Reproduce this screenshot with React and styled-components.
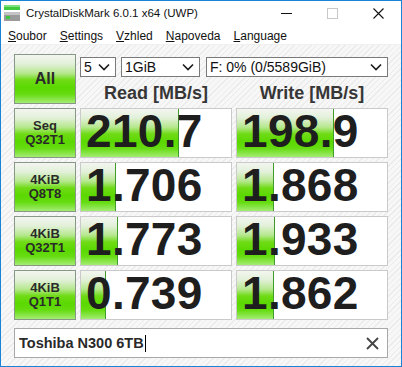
import React from 'react';
import styled, { createGlobalStyle } from 'styled-components';

const GlobalStyle = createGlobalStyle`
  html, body { margin: 0; padding: 0; background: #ffffff; }
  body { font-family: "Liberation Sans", Arial, sans-serif; }
  * { box-sizing: border-box; }
`;

const rows = [
  { top: 'Seq', bottom: 'Q32T1', read: '210.7', readFill: 98, write: '198.9', writeFill: 97 },
  { top: '4KiB', bottom: 'Q8T8', read: '1.706', readFill: 35, write: '1.868', writeFill: 37 },
  { top: '4KiB', bottom: 'Q32T1', read: '1.773', readFill: 37, write: '1.933', writeFill: 38 },
  { top: '4KiB', bottom: 'Q1T1', read: '0.739', readFill: 25, write: '1.862', writeFill: 37 },
];

const menus = [
  ['S', 'oubor'],
  ['S', 'ettings'],
  ['V', 'zhled'],
  ['N', 'apoveda'],
  ['L', 'anguage'],
];

const greenGradient = `linear-gradient(to bottom,
  #f3f6f0 0%, #e3f0da 18%, #b6e88e 38%, #6fdb16 52%, #5bd800 68%, #66dc12 82%, #a4ec74 100%)`;

export default function App() {
  return (
    <>
      <GlobalStyle />
      <Window>
        <TitleBar>
          <AppIcon width="16" height="16" viewBox="0 0 16 16">
            <rect x="0" y="0" width="16" height="5" fill="#3fc93f" />
            <rect x="0" y="0" width="16" height="2" fill="#7ee07e" />
            <rect x="0" y="7" width="16" height="9" fill="#9a9a9a" />
            <rect x="0" y="7" width="16" height="3" fill="#c4c4c4" />
            <rect x="2" y="11" width="4" height="3" fill="#40c840" />
          </AppIcon>
          <Title>CrystalDiskMark 6.0.1 x64 (UWP)</Title>
          <Captions>
            <CaptionButton>
              <svg width="11" height="11" viewBox="0 0 11 11">
                <line x1="0" y1="5.5" x2="11" y2="5.5" stroke="#111" strokeWidth="1" />
              </svg>
            </CaptionButton>
            <CaptionButton>
              <svg width="11" height="11" viewBox="0 0 11 11">
                <rect x="0.5" y="0.5" width="10" height="10" fill="none" stroke="#c8c8c8" strokeWidth="1" />
              </svg>
            </CaptionButton>
            <CaptionButton>
              <svg width="11" height="11" viewBox="0 0 11 11">
                <path d="M0.5 0.5 L10.5 10.5 M10.5 0.5 L0.5 10.5" stroke="#111" strokeWidth="1.1" />
              </svg>
            </CaptionButton>
          </Captions>
        </TitleBar>

        <MenuBar>
          {menus.map(([key, rest]) => (
            <MenuItem key={key + rest}>
              <u>{key}</u>{rest}
            </MenuItem>
          ))}
        </MenuBar>

        <Content>
          <Grid>
            <TestButton $big>All</TestButton>
            <TopPanel>
              <SelectRow>
                <Combo $width={36}>5<Chevron /></Combo>
                <Combo $width={79}>1GiB<Chevron /></Combo>
                <Combo $grow>F: 0% (0/5589GiB)<Chevron /></Combo>
              </SelectRow>
              <HeaderRow>
                <Header>Read [MB/s]</Header>
                <Header>Write [MB/s]</Header>
              </HeaderRow>
            </TopPanel>

            {rows.map((r) => (
              <React.Fragment key={r.bottom + r.read}>
                <TestButton>
                  {r.top}
                  <br />
                  {r.bottom}
                </TestButton>
                <ValueBox>
                  <Meter style={{ width: r.readFill }} />
                  <Value>{r.read}</Value>
                </ValueBox>
                <ValueBox>
                  <Meter style={{ width: r.writeFill }} />
                  <Value>{r.write}</Value>
                </ValueBox>
              </React.Fragment>
            ))}
          </Grid>

          <NameBar>
            <NameText>Toshiba N300 6TB</NameText>
            <Caret />
            <ClearIcon width="13" height="13" viewBox="0 0 13 13">
              <path d="M1 1 L12 12 M12 1 L1 12" stroke="#444" strokeWidth="1.8" />
            </ClearIcon>
          </NameBar>
        </Content>
      </Window>
    </>
  );
}

function Chevron() {
  return (
    <ChevronSvg width="12" height="8" viewBox="0 0 12 8">
      <polyline points="1,1.5 6,6.5 11,1.5" fill="none" stroke="#1a1a1a" strokeWidth="1.6" />
    </ChevronSvg>
  );
}

const Window = styled.div`
  width: 402px;
  height: 367px;
  border: 1px solid #1883d7;
  display: flex;
  flex-direction: column;
  background: #ffffff;
  overflow: hidden;
`;

const TitleBar = styled.div`
  height: 29px;
  display: flex;
  align-items: flex-start;
  background: #ffffff;
`;

const AppIcon = styled.svg`
  margin: 4px 0 0 3px;
  flex: none;
`;

const Title = styled.div`
  margin: 6px 0 0 6px;
  font-size: 11.5px;
  color: #111;
  white-space: nowrap;
`;

const Captions = styled.div`
  margin-left: auto;
  display: flex;
  height: 29px;
`;

const CaptionButton = styled.div`
  width: 46px;
  height: 29px;
  display: flex;
  align-items: flex-start;
  justify-content: center;
  padding-top: 7px;
`;

const MenuBar = styled.div`
  height: 14px;
  display: flex;
  gap: 13px;
  padding-left: 7px;
  font-size: 12px;
  line-height: 12px;
  color: #111;
  background: #ffffff;
  border-bottom: 1px solid #f0f0f0;
  box-sizing: content-box;
`;

const MenuItem = styled.span`
  white-space: nowrap;
  u { text-decoration-thickness: 1px; text-underline-offset: 1px; }
`;

const Content = styled.div`
  flex: 1;
  padding: 9px 13px 8px 13px;
  background-color: #f7f7f7;
  background-image: repeating-linear-gradient(
    135deg,
    #f7f7f7 0px,
    #f7f7f7 3px,
    #ebebeb 3px,
    #ebebeb 4px
  );
  display: flex;
  flex-direction: column;
`;

const Grid = styled.div`
  display: grid;
  grid-template-columns: 62px 152px 152px;
  grid-auto-rows: 50px;
  gap: 4px;
`;

const TestButton = styled.div`
  border: 1px solid #879887;
  background: ${greenGradient};
  display: flex;
  align-items: center;
  justify-content: center;
  text-align: center;
  font-weight: bold;
  color: #2a2a2a;
  font-size: ${(p) => (p.$big ? '16px' : '13px')};
  line-height: 14px;
`;

const TopPanel = styled.div`
  grid-column: 2 / span 2;
  display: flex;
  flex-direction: column;
`;

const SelectRow = styled.div`
  display: flex;
  gap: 5px;
  margin-top: 3px;
  height: 20px;
`;

const Combo = styled.div`
  width: ${(p) => (p.$width ? `${p.$width}px` : 'auto')};
  flex: ${(p) => (p.$grow ? '1' : 'none')};
  margin-right: ${(p) => (p.$width === 79 ? '1px' : '0')};
  height: 20px;
  border: 1px solid #7a7a7a;
  background: #ffffff;
  display: flex;
  align-items: center;
  padding-left: 3px;
  font-size: 14px;
  color: #111;
  white-space: nowrap;
`;

const ChevronSvg = styled.svg`
  margin-left: auto;
  margin-right: 5px;
  flex: none;
`;

const HeaderRow = styled.div`
  display: grid;
  grid-template-columns: 152px 152px;
  gap: 4px;
`;

const Header = styled.div`
  text-align: center;
  font-weight: bold;
  font-size: 18px;
  line-height: 21px;
  padding-top: 6px;
  color: #363636;
`;

const ValueBox = styled.div`
  position: relative;
  border: 1px solid #cacaca;
  background: #ffffff;
`;

const Meter = styled.div`
  position: absolute;
  left: 0;
  top: 0;
  bottom: 0;
  background: ${greenGradient};
  border-right: 1px solid #3f9b2a;
`;

const Value = styled.div`
  position: relative;
  top: -3px;
  padding-left: 5px;
  font-weight: bold;
  font-size: 46px;
  line-height: 50px;
  height: 48px;
  color: #1e1e1e;
  white-space: nowrap;
  letter-spacing: 0.3px;
`;

const NameBar = styled.div`
  margin-top: 8px;
  height: 30px;
  border: 1px solid #a8a8a8;
  background: #ffffff;
  display: flex;
  align-items: center;
  padding: 0 8px 0 4px;
`;

const NameText = styled.span`
  font-weight: bold;
  font-size: 14.5px;
  color: #2a2a2a;
  white-space: nowrap;
`;

const Caret = styled.span`
  display: inline-block;
  width: 1px;
  height: 17px;
  margin-left: 1px;
  background: #000;
`;

const ClearIcon = styled.svg`
  margin-left: auto;
`;
